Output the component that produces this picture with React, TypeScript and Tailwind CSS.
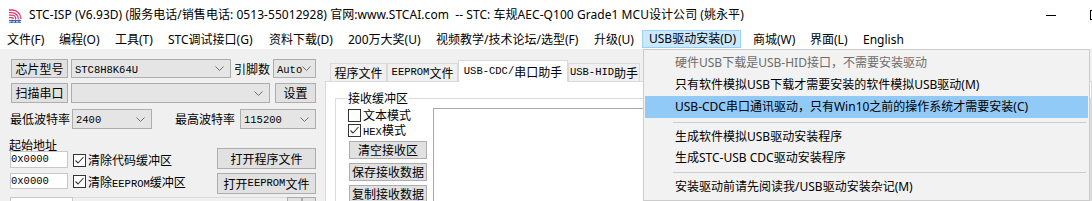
import React from "react";

const UI = "font-['Noto_Sans','Noto_Sans_CJK_SC',sans-serif]";
const SIM = "font-['Noto_Sans_CJK_SC',sans-serif]";

function M({ children }: { children: React.ReactNode }) {
  return <span className="font-['Liberation_Mono',monospace] text-[10.5px]">{children}</span>;
}

function Chevron() {
  return (
    <svg width="9" height="5" viewBox="0 0 9 5" className="shrink-0">
      <polyline points="0.5,0.5 4.5,4.5 8.5,0.5" fill="none" stroke="#707070" strokeWidth="1" />
    </svg>
  );
}

function Combo({ className, children }: { className: string; children?: React.ReactNode }) {
  return (
    <div className={`flex items-center justify-between border border-[#adadad] bg-[#e5e5e5] pl-[3px] pr-[6px] shrink-0 ${className}`}>
      <span className="leading-none">{children}</span>
      <Chevron />
    </div>
  );
}

function Btn({ className, children }: { className: string; children: React.ReactNode }) {
  return (
    <div className={`flex items-center justify-center border border-[#adadad] bg-[#e1e1e1] leading-none shrink-0 ${className}`}>
      {children}
    </div>
  );
}

function Check({ checked }: { checked?: boolean }) {
  return (
    <div className="w-[13px] h-[13px] border border-[#333333] bg-white shrink-0 flex items-center justify-center">
      {checked && (
        <svg width="11" height="11" viewBox="0 0 11 11">
          <polyline points="1.5,5.5 4,8 9.5,2" fill="none" stroke="#333333" strokeWidth="1.1" />
        </svg>
      )}
    </div>
  );
}

function Logo() {
  return (
    <svg width="15" height="15" viewBox="0 0 15 15" className="shrink-0">
      <g fill="none" stroke="#e8336b" strokeWidth="1.3">
        <path d="M1 2 H4 A9 9 0 0 1 13 11" />
        <path d="M1 4.6 H4 A6.4 6.4 0 0 1 10.4 11" />
        <path d="M1 7.2 H4 A3.8 3.8 0 0 1 7.8 11" />
        <path d="M1 9.6 H4 A1.4 1.4 0 0 1 5.4 11" />
      </g>
      <g stroke="#2f5fb8" strokeWidth="1">
        <path d="M1 12.5 H13" />
        <path d="M1 14.2 H13" />
        <path d="M4 11.5 V15" />
        <path d="M7.5 11.5 V15" />
        <path d="M11 11.5 V15" />
      </g>
    </svg>
  );
}

function Tab({ children, sel, className }: { children: React.ReactNode; sel?: boolean; className: string }) {
  return sel ? (
    <div className={`h-[22px] -mb-px border border-b-0 border-[#d9d9d9] bg-white flex items-center justify-center leading-none relative z-10 shrink-0 ${className}`}>
      {children}
    </div>
  ) : (
    <div className={`h-[18px] border border-b-0 border-[#d9d9d9] bg-[#f0f0f0] flex items-center justify-center leading-none shrink-0 ${className}`}>
      {children}
    </div>
  );
}

export default function App() {
  return (
    <div className={`w-[1092px] h-[201px] overflow-hidden relative bg-[#f0f0f0] text-black text-[12px] ${UI}`}>
      {/* title bar */}
      <div className="h-[30px] bg-white flex items-center">
        <div className="ml-[8px]">
          <Logo />
        </div>
        <span className="ml-[6px] whitespace-pre leading-none tracking-[0.05px]">
          STC-ISP (V6.93D) (服务电话/销售电话: 0513-55012928) 官网:www.STCAI.com  -- STC: 车规AEC-Q100 Grade1 MCU设计公司 (姚永平)
        </span>
        <div className="ml-auto mr-[-8px] flex items-center gap-[34px]">
          <div className="w-[10px] h-px bg-black" />
          <div className="w-[10px] h-[10px] border border-black" />
        </div>
      </div>

      {/* menu bar */}
      <div className="h-[19px] bg-white flex items-stretch whitespace-nowrap leading-none">
        <div className="w-[52px] pl-[7px] flex items-center shrink-0">文件(F)</div>
        <div className="w-[55px] pl-[7px] flex items-center shrink-0">编程(O)</div>
        <div className="w-[53px] pl-[8px] flex items-center shrink-0">工具(T)</div>
        <div className="w-[102px] pl-[8px] flex items-center shrink-0">STC调试接口(G)</div>
        <div className="w-[79px] pl-[7px] flex items-center shrink-0">资料下载(D)</div>
        <div className="w-[87px] pl-[7px] flex items-center shrink-0">200万大奖(U)</div>
        <div className="w-[158px] pl-[8px] flex items-center shrink-0">视频教学/技术论坛/选型(F)</div>
        <div className="w-[56px] pl-[8px] flex items-center shrink-0">升级(U)</div>
        <div className="w-[99px] pl-[6px] flex items-center shrink-0 bg-[#cce8ff] border border-[#99d1ff] mb-px">
          USB驱动安装(D)
        </div>
        <div className="w-[62px] pl-[12px] flex items-center shrink-0">商城(W)</div>
        <div className="w-[52px] pl-[7px] flex items-center shrink-0">界面(L)</div>
        <div className="pl-[8px] flex items-center shrink-0">English</div>
      </div>

      {/* body */}
      <div className={`flex ${SIM}`}>
        {/* left panel */}
        <div className="w-[325px] shrink-0 pl-[11px] pr-[9px] pt-[10px] flex flex-col">
          <div className="flex items-center h-[19px]">
            <Btn className="w-[57px] h-[19px]">芯片型号</Btn>
            <Combo className="ml-[3px] w-[160px] h-[19px]">
              <M>STC8H8K64U</M>
            </Combo>
            <span className="ml-[3px] leading-none">引脚数</span>
            <Combo className="ml-[3px] w-[43px] h-[19px]">
              <M>Auto</M>
            </Combo>
          </div>
          <div className="flex items-center h-[20px] mt-[5px]">
            <Btn className="w-[57px] h-[20px]">扫描串口</Btn>
            <Combo className="ml-[3px] w-[199px] h-[20px]" />
            <Btn className="ml-[5px] w-[41px] h-[20px]">设置</Btn>
          </div>
          <div className="flex items-center h-[20px] mt-[6px]">
            <span className="ml-[-1px] leading-none">最低波特率</span>
            <Combo className="ml-[2px] w-[80px] h-[20px]">
              <M>2400</M>
            </Combo>
            <span className="ml-[23px] leading-none">最高波特率</span>
            <Combo className="ml-[5px] w-[76px] h-[20px]">
              <M>115200</M>
            </Combo>
          </div>
          <div className="mt-[8px] ml-[-2px] leading-[16px] h-[16px]">起始地址</div>
          <div className="flex items-end h-[21px] mt-[-5px]">
            <div className="w-[58px] h-[17px] ml-[-1px] mb-px border border-[#c8c8c8] bg-white flex items-center leading-none">
              <M>0x0000</M>
            </div>
            <div className="ml-[5px] mb-[2px]">
              <Check checked />
            </div>
            <span className="ml-[2px] mb-[3px] leading-none">清除代码缓冲区</span>
            <Btn className="ml-auto w-[99px] h-[21px]">打开程序文件</Btn>
          </div>
          <div className="flex items-start h-[21px] mt-[4px]">
            <div className="w-[58px] h-[16px] ml-[-1px] border border-[#c8c8c8] bg-white flex items-center leading-none">
              <M>0x0000</M>
            </div>
            <div className="ml-[5px] mt-[2px]">
              <Check checked />
            </div>
            <span className="ml-[2px] mt-[3px] leading-none">
              清除<M>EEPROM</M>缓冲区
            </span>
            <Btn className="ml-auto w-[99px] h-[21px]">
              打开<M>EEPROM</M>文件
            </Btn>
          </div>
          <div className="flex items-start h-[20px] mt-[3px]">
            <div className="w-[63px] h-[20px] ml-[-1px] border border-[#c8c8c8] bg-white" />
            <div className="w-[214px] h-[20px] border-t border-[#dcdcdc]" />
            <div className="w-[15px] h-[20px] border border-[#adadad] bg-[#e1e1e1]" />
            <div className="w-[14px] h-[20px] border border-[#adadad] bg-[#e1e1e1]" />
          </div>
        </div>

        {/* tab area */}
        <div className="flex-1 flex flex-col pt-[10px]">
          <div className="flex items-end h-[22px] pl-[5px]">
            <Tab className="w-[57px]">程序文件</Tab>
            <Tab className="w-[71px]">
              <M>EEPROM</M>文件
            </Tab>
            <Tab sel className="w-[110px]">
              <M>USB-CDC/</M>串口助手
            </Tab>
            <Tab className="w-[72px]">
              <M>USB-HID</M>助手
            </Tab>
          </div>
          <div className="h-[130px] border border-[#d9d9d9] bg-white pl-[9px] pt-[16px]">
            <div className="relative h-[130px] border border-[#dcdcdc]">
              <div className="absolute left-[11px] top-[-8px] bg-white px-[1px] leading-[14px]">接收缓冲区</div>
              <div className="flex pl-[12px] pt-[10px]">
                <div className="flex flex-col w-[79px] shrink-0">
                  <div className="flex items-start h-[15px]">
                    <Check />
                    <span className="ml-[2px] leading-[12px] h-[13px]">文本模式</span>
                  </div>
                  <div className="flex items-start h-[14px]">
                    <Check checked />
                    <span className="ml-[2px] leading-[12px] h-[13px]">
                      <M>HEX</M>模式
                    </span>
                  </div>
                  <Btn className="ml-[1px] mt-[3px] w-[78px] h-[18px]">清空接收区</Btn>
                  <Btn className="ml-[1px] mt-[4px] w-[78px] h-[18px]">保存接收数据</Btn>
                  <Btn className="ml-[1px] mt-[4px] w-[78px] h-[18px]">复制接收数据</Btn>
                </div>
                <div className="ml-[6px] -mt-px flex-1 h-[120px] border border-[#a9a9a9] bg-white" />
              </div>
            </div>
          </div>
        </div>
      </div>

      {/* dropdown menu */}
      <div className={`absolute left-[643px] top-[49px] w-[447px] h-[152px] border border-[#cccccc] bg-[#f2f2f2] pt-[2px] px-px ${UI}`}>
        <div className="h-[22px] flex items-center pl-[30px] text-[#6d6d6d] leading-none">硬件USB下载是USB-HID接口，不需要安装驱动</div>
        <div className="h-[22px] flex items-center pl-[30px] leading-none">只有软件模拟USB下载才需要安装的软件模拟USB驱动(M)</div>
        <div className="h-[22px] flex items-center pl-[30px] leading-none bg-[#91c9f7]">USB-CDC串口通讯驱动，只有Win10之前的操作系统才需要安装(C)</div>
        <div className="h-[8px] flex items-center pl-[28px] pr-[2px]">
          <div className="h-px w-full bg-[#cccccc]" />
        </div>
        <div className="h-[21px] flex items-center pl-[30px] leading-none">生成软件模拟USB驱动安装程序</div>
        <div className="h-[21px] flex items-center pl-[30px] leading-none">生成STC-USB CDC驱动安装程序</div>
        <div className="h-[9px] flex items-center pl-[28px] pr-[2px]">
          <div className="h-px w-full bg-[#cccccc]" />
        </div>
        <div className="h-[20px] flex items-center pl-[30px] leading-none">安装驱动前请先阅读我/USB驱动安装杂记(M)</div>
      </div>
    </div>
  );
}
